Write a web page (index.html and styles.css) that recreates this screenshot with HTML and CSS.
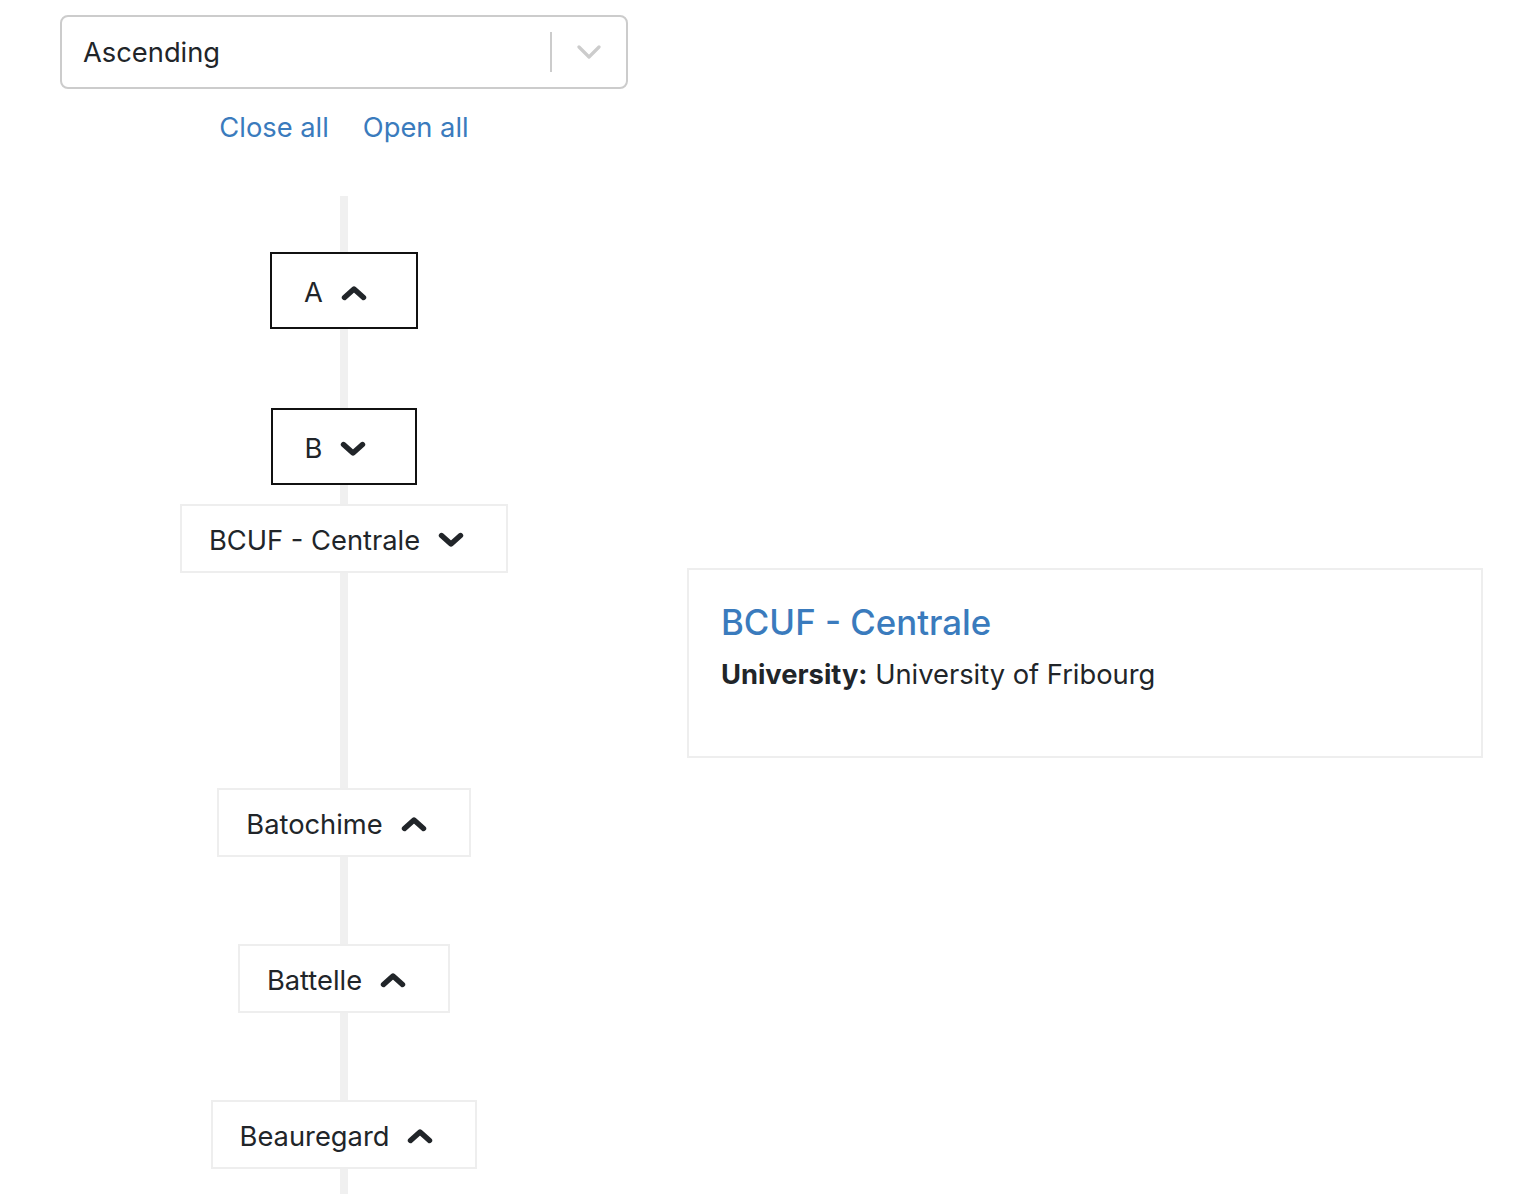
FILE: index.html
```html
<!DOCTYPE html>
<html lang="en">
<head>
<meta charset="utf-8">
<title>Timeline</title>
<link rel="stylesheet" href="styles.css">
</head>
<body>
<div class="top">
  <div class="select">
    <span class="select-value">Ascending</span>
    <span class="select-sep"></span>
    <svg class="select-arrow" width="24" height="16" viewBox="0 0 24 16"><polyline points="2,3 12,13 22,3" fill="none" stroke="#cccccc" stroke-width="3.2" stroke-linecap="round" stroke-linejoin="round"/></svg>
  </div>
  <div class="links">
    <a href="#" class="link">Close all</a>
    <a href="#" class="link">Open all</a>
  </div>
</div>

<div class="timeline">
  <div class="row row-a">
    <div class="cell"><div class="letter">A<svg class="chev" width="26" height="16" viewBox="0 0 26 16"><polyline points="3.5,12.5 13,4 22.5,12.5" fill="none" stroke="#212529" stroke-width="5.4" stroke-linecap="round" stroke-linejoin="round"/></svg></div></div>
  </div>
  <div class="row row-b">
    <div class="cell"><div class="letter">B<svg class="chev" width="26" height="16" viewBox="0 0 26 16"><polyline points="3.5,3.5 13,12 22.5,3.5" fill="none" stroke="#212529" stroke-width="5.4" stroke-linecap="round" stroke-linejoin="round"/></svg></div></div>
  </div>
  <div class="row row-item">
    <div class="cell"><div class="item">BCUF - Centrale<svg class="chev" width="26" height="16" viewBox="0 0 26 16"><polyline points="3.5,3.5 13,12 22.5,3.5" fill="none" stroke="#212529" stroke-width="5.4" stroke-linecap="round" stroke-linejoin="round"/></svg></div></div>
  </div>
  <div class="row row-detail">
    <div class="cell"></div>
    <div class="card">
      <a href="#" class="card-title">BCUF - Centrale</a>
      <p class="card-text"><strong>University:</strong> University of Fribourg</p>
    </div>
  </div>
  <div class="row row-item spaced">
    <div class="cell"><div class="item">Batochime<svg class="chev" width="26" height="16" viewBox="0 0 26 16"><polyline points="3.5,12.5 13,4 22.5,12.5" fill="none" stroke="#212529" stroke-width="5.4" stroke-linecap="round" stroke-linejoin="round"/></svg></div></div>
  </div>
  <div class="row row-item spaced">
    <div class="cell"><div class="item">Battelle<svg class="chev" width="26" height="16" viewBox="0 0 26 16"><polyline points="3.5,12.5 13,4 22.5,12.5" fill="none" stroke="#212529" stroke-width="5.4" stroke-linecap="round" stroke-linejoin="round"/></svg></div></div>
  </div>
  <div class="row row-item">
    <div class="cell"><div class="item">Beauregard<svg class="chev" width="26" height="16" viewBox="0 0 26 16"><polyline points="3.5,12.5 13,4 22.5,12.5" fill="none" stroke="#212529" stroke-width="5.4" stroke-linecap="round" stroke-linejoin="round"/></svg></div></div>
  </div>
</div>
</body>
</html>
```

FILE: styles.css
```css
* { box-sizing: border-box; }
html, body { margin: 0; padding: 0; background: #fff; }
body {
  font-family: Inter, "Liberation Sans", sans-serif;
  font-size: 27.3px;
  color: #212529;
  overflow: hidden;
}
.top {
  width: 688px;
  padding-top: 15px;
}
.select {
  margin-left: 60px;
  width: 568px;
  height: 74px;
  border: 2px solid #cccccc;
  border-radius: 8px;
  display: flex;
  align-items: center;
  padding-left: 21px;
  padding-right: 25px;
}
.select-value { flex: 1; }
.select-sep {
  width: 2px;
  height: 40px;
  background: #cccccc;
  margin-right: 25px;
}
.select-arrow { display: block; }
.links {
  display: flex;
  justify-content: center;
  gap: 34px;
  margin-top: 22px;
  line-height: 34px;
}
.link { color: #3a7bbd; text-decoration: none; }
.timeline {
  margin-top: 51px;
  padding-top: 56px;
  min-height: 1100px;
  background: linear-gradient(#f0f0f0, #f0f0f0) 340px 0 / 8px 100% no-repeat;
}
.row {
  display: grid;
  grid-template-columns: 688px 795px;
}
.cell { display: flex; justify-content: center; align-items: flex-start; }
.letter {
  background: #fff;
  border: 2px solid #111;
  padding: 4px 49px 0 32px;
  height: 77px;
  display: flex;
  align-items: center;
}
.item {
  background: #fff;
  border: 2px solid #eeeeee;
  padding: 3px 42px 0 27px;
  height: 69px;
  display: flex;
  align-items: center;
}
.chev { display: block; margin-left: 18px; }
.row-a { margin-bottom: 79px; }
.row-b { margin-bottom: 19px; }
.row-detail { margin-top: -5px; margin-bottom: 30px; }
.row-item.spaced { margin-bottom: 87px; }
.card {
  margin-left: -1px;
  border: 2px solid #eeeeee;
  height: 190px;
  padding: 32px 32px;
  background: #fff;
}
.card-title {
  display: block;
  color: #3a7bbd;
  text-decoration: none;
  font-size: 34.8px;
  font-weight: 500;
  line-height: 40px;
}
.card-text { margin: 16px 0 0; line-height: 34px; }
.card-text strong { font-weight: 700; }
```
